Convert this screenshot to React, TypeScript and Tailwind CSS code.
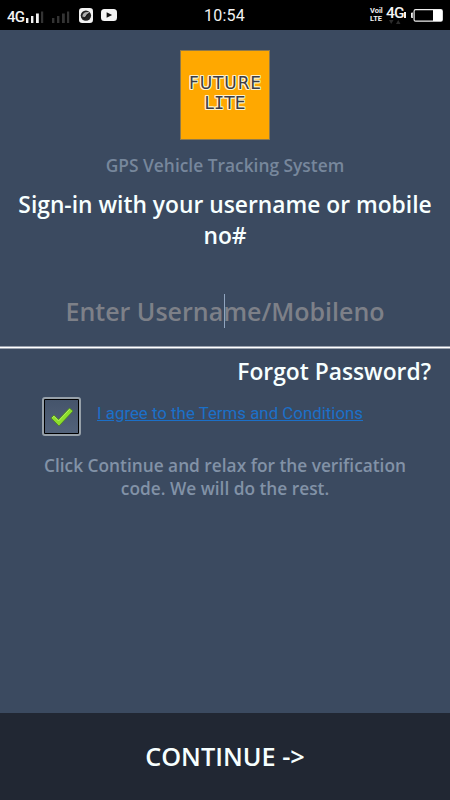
function Bars({ dim }: { dim?: boolean }) {
  return (
    <svg className="h-[12px] w-[18px]" viewBox="0 0 18 12" fill={dim ? '#333' : '#f2f2f2'}>
      <rect x="0" y="7" width="2.4" height="5" />
      <rect x="5" y="5" width="2.4" height="7" />
      <rect x="10" y="2.5" width="2.8" height="9.5" />
      <rect x="15" y="0.5" width="2.2" height="11.5" fill="#333" />
    </svg>
  )
}

function StatusBar() {
  return (
    <div className="relative flex h-[30px] shrink-0 items-center bg-black font-['Roboto',sans-serif] font-normal text-[#f2f2f2]">
      <span className="ml-[7px] mt-[4px] w-[19px] text-[15px] leading-none font-medium tracking-[-0.8px]">4G</span>
      <span className="mt-[3px] flex"><Bars /></span>
      <span className="ml-[8px] mt-[3px] flex"><Bars dim /></span>

      <svg className="ml-[9px] h-[15px] w-[14px]" viewBox="0 0 14 15">
        <rect width="14" height="15" rx="3.2" fill="#f2f2f2" />
        <circle cx="6.9" cy="7.6" r="5.2" fill="#222" />
        <path d="M3.3 8.5 C3.6 4.2 7.5 3.2 10.6 4.4 L7.8 6.2 L6.2 9.2 Z" fill="#aaa" />
        <path d="M5 10.8 L9.8 5.4" stroke="#111" strokeWidth="1" />
      </svg>
      <svg className="ml-[8px] h-[12px] w-[16px]" viewBox="0 0 17 12" preserveAspectRatio="none">
        <rect width="17" height="12" rx="3.5" fill="#f4f4f4" />
        <path d="M6 3.2 L11.8 6 L6 8.8 Z" fill="#111" />
      </svg>

      <span className="absolute left-[204px] top-[6px] text-[16px] leading-[19px] tracking-[0.2px]">10:54</span>

      <div className="ml-auto mr-[7px] flex items-center">
        <div className="w-[15px] text-[7.5px] leading-[8px] font-bold">
          <div>Vo<span className="text-[7px]">il</span></div>
          <div>LTE</div>
        </div>
        <div className="relative ml-px flex h-[18px] w-[21px]">
          <span className="w-[18px] text-[15.5px] leading-[14px] font-medium tracking-[-0.8px]">4G</span>
          <svg className="absolute left-[3px] top-[14px] h-[5px] w-[12px]" viewBox="0 0 12 5" fill="#2c2c2c">
            <path d="M0 0 H4.5 L2.2 4 Z M7 4 H11.5 L9.2 0 Z" />
          </svg>
          <span className="mt-[6px] h-[6px] w-[2px] bg-[#f2f2f2]" />
        </div>
        <svg className="ml-[4px] h-[13px] w-[32px]" viewBox="0 0 32 13">
          <path d="M1.8 4 H0.5 V8.5 H1.8" fill="#eee" stroke="#eee" />
          <rect x="3.1" y="0.7" width="28.2" height="11.5" rx="1.5" fill="none" stroke="#eee" strokeWidth="1.2" />
          <rect x="22" y="1" width="9" height="11" fill="#fff" />
        </svg>
      </div>
    </div>
  )
}

function Logo() {
  return (
    <div className="mx-auto h-[90px] w-[90px] shrink-0 border border-[#8f7a4c] bg-[#ffa800] pt-[22px] text-center font-['DejaVu_Sans',sans-serif] text-[17px] leading-[20px] font-normal whitespace-nowrap text-[#3a3c46] [text-shadow:1px_0_#fff4d0,-1px_0_#fff4d0,0_1px_#fff4d0,0_-1px_#fff4d0,1px_1px_#ffe9b0,-1px_-1px_#ffe9b0,1px_-1px_#ffe9b0,-1px_1px_#ffe9b0]">
      <div className="-mx-1 pl-px tracking-[0.9px]">FUTURE</div>
      <div className="tracking-[0.1px]">L<span className="font-['DejaVu_Sans_Mono',monospace]">I</span>TE</div>
    </div>
  )
}

export default function App() {
  return (
    <div className="flex h-[800px] w-[450px] flex-col overflow-hidden bg-[#3b4a60] font-['Open_Sans',sans-serif] font-semibold text-[#f7ffff]">
      <StatusBar />

      <main className="flex flex-1 flex-col pt-[20px]">
        <Logo />
        <p className="mt-[13px] text-center text-[17.35px] leading-[24px] text-[#77879c]">
          GPS Vehicle Tracking System
        </p>
        <h1 className="mt-[12px] text-center text-[22.8px] leading-[31px]">
          Sign-in with your username or mobile<br />no#
        </h1>

        <div className="relative mt-[43px] h-[52px] text-center text-[25px] leading-[34px] text-[#7d8088]">
          Enter Username/Mobileno
          <span className="absolute left-[224px] top-0 h-[34px] w-px bg-[#91a5bf]" />
        </div>
        <div className="h-[3px] shrink-0 border-y border-[#9ba3b0] bg-white" />

        <p className="mr-[19px] mt-[7px] text-right text-[22.8px] leading-[32px]">Forgot Password?</p>

        <div className="mt-[9px] flex h-[39px] items-start pl-[42px]">
          <div className="flex h-[39px] w-[39px] items-center justify-center rounded-[3px] border-2 border-[#97a1aa] bg-black p-px">
            <div className="flex h-full w-full items-center justify-center bg-linear-to-b from-[#45546b] to-[#52627a]">
              <svg className="h-[20px] w-[24px]" viewBox="0 0 24 20">
                <path d="M1 11 L4 8 L8.5 12.5 L19.5 1 L23 4 L9 19 Z" fill="#8cdd2b" stroke="#487c20" strokeWidth="0.7" />
                <path d="M2.3 10.7 L4 9.3 L8.5 14 L19.7 2.2" fill="none" stroke="#b6ef62" strokeWidth="0.9" />
              </svg>
            </div>
          </div>
          <a href="#" className="ml-[16px] mt-[6px] font-['Roboto',sans-serif] text-[16.85px] leading-[20px] font-normal text-[#1c70c8] underline">
            I agree to the Terms and Conditions
          </a>
        </div>

        <p className="mt-[18px] text-center text-[17.3px] leading-[23px] text-[#8292a7]">
          Click Continue and relax for the verification<br />code. We will do the rest.
        </p>
      </main>

      <button className="h-[87px] shrink-0 bg-[#212733] pb-[2px] text-[25.3px] leading-[34px]">CONTINUE -&gt;</button>
    </div>
  )
}
